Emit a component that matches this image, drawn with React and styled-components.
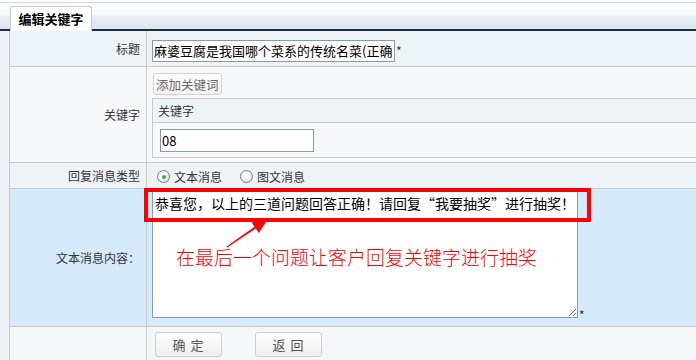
import React from "react";
import styled, { createGlobalStyle } from "styled-components";

const Global = createGlobalStyle`
  html, body { margin: 0; padding: 0; background: #fff; }
  body { font-family: "Noto Sans CJK SC", "Noto Sans", sans-serif; font-size: 12px; color: #333; overflow: hidden; }
  * { box-sizing: border-box; }
`;

const Page = styled.div`
  width: 696px;
  height: 360px;
  overflow: hidden;
  background: #fff;
`;

const Header = styled.div`
  margin-top: 2px;
  height: 29px;
  border-top: 1px solid #d6d8db;
  border-bottom: 2px solid #1b2d42;
  background: linear-gradient(#fbfcfd 0%, #f6f8fa 45%, #e7ecf1 55%, #dee5ed 100%);
  display: flex;
  align-items: flex-end;
  padding-left: 10px;
`;

const Tab = styled.div`
  width: 82px;
  height: 25px;
  margin-bottom: -2px;
  background: #fff;
  border: 1px solid #c4c9cf;
  border-bottom: none;
  border-radius: 3px 3px 0 0;
  display: flex;
  align-items: center;
  justify-content: center;
  padding-bottom: 2px;
  font-size: 13px;
  font-weight: bold;
  color: #000;
`;

const Body = styled.div`
  display: flex;
`;

const Gutter = styled.div`
  width: 9px;
  flex: none;
  background: #eef1f5;
`;

const Form = styled.div`
  flex: 1;
  border-left: 1px solid #c8cbce;
`;

const Row = styled.div`
  display: grid;
  grid-template-columns: 137px 1fr;
  height: ${(p) => p.$h}px;
  background: ${(p) => p.$bg};
  border-bottom: ${(p) => (p.$last ? "none" : "1px solid #c9c9c9")};
  box-sizing: content-box;
`;

const Label = styled.div`
  border-right: 1px solid #cbcbcb;
  display: flex;
  align-items: center;
  justify-content: flex-end;
  padding-right: 6px;
  font-size: 12px;
  color: #333;
`;

const Cell = styled.div`
  display: flex;
  align-items: ${(p) => p.$align || "center"};
  padding: ${(p) => p.$pad || "0 0 0 5px"};
  position: relative;
  min-width: 0;
`;

const Stack = styled.div`
  display: flex;
  flex-direction: column;
  align-items: flex-start;
  padding: 6px 0 0 5px;
  min-width: 0;
`;

const TextInput = styled.input`
  width: ${(p) => p.$w}px;
  height: ${(p) => p.$h || 22}px;
  border: 1px solid #7f9db9;
  padding: 0 1px;
  font-family: "Noto Sans CJK SC", sans-serif;
  font-size: 13px;
  color: #000;
  background: #fff;
  outline: none;
  overflow: hidden;
`;

const Star = styled.span`
  font-size: 12px;
  color: #333;
  margin-left: 1px;
  line-height: 1;
  align-self: ${(p) => p.$self || "auto"};
  margin-bottom: ${(p) => p.$mb || 0}px;
`;

const SmallButton = styled.button`
  height: 22px;
  padding: 0 2px 0 2px;
  margin-left: 1px;
  border: 1px solid #d3d3d3;
  border-radius: 3px;
  background: linear-gradient(#ffffff, #f1f1f1);
  font-family: "Noto Sans CJK SC", sans-serif;
  font-size: 12.5px;
  color: #6a6a6a;
`;

const SubTable = styled.div`
  margin-top: 3px;
  width: 560px;
  border: 1px solid #c8c8c8;
  border-right: none;
`;

const SubHead = styled.div`
  height: 24px;
  background: #eef3f8;
  border-bottom: 1px solid #c8c8c8;
  display: flex;
  align-items: center;
  padding-left: 5px;
  font-size: 12px;
  color: #333;
`;

const SubBody = styled.div`
  height: 34px;
  background: #f7f8f9;
  padding: 6px 0 0 7px;
`;

const RadioGroup = styled.div`
  display: flex;
  align-items: center;
  padding-left: 5px;
  padding-top: 2px;
`;

const RadioItem = styled.label`
  display: flex;
  align-items: center;
  gap: 4px;
  margin-right: 18px;
  font-size: 12px;
  color: #333;
`;

const RadioDot = styled.span`
  width: 13px;
  height: 13px;
  border-radius: 50%;
  border: 1px solid #6e8092;
  background: radial-gradient(circle at 40% 35%, #ffffff 0%, #eceff2 55%, #c6ccd4 100%);
  position: relative;
  &::after {
    content: "";
    display: ${(p) => (p.$on ? "block" : "none")};
    position: absolute;
    left: 3.5px;
    top: 3.5px;
    width: 4px;
    height: 4px;
    border-radius: 50%;
    background: #2fb22f;
  }
`;

const TextArea = styled.textarea`
  width: 426px;
  height: 128px;
  margin: 1px 0 0 0;
  border: 1px solid #7f9db9;
  padding: 2px 2px;
  font-family: "Noto Sans CJK SC", sans-serif;
  font-size: 14px;
  letter-spacing: 0;
  line-height: 20px;
  color: #000;
  background: #fff;
  outline: none;
  overflow: hidden;
  resize: both;
`;

const Highlight = styled.div`
  position: absolute;
  left: -3px;
  top: -1px;
  width: 447px;
  height: 34px;
  border: 4px solid #ff0000;
  pointer-events: none;
`;

const Arrow = styled.svg`
  position: absolute;
  left: 0;
  top: 0;
  width: 160px;
  height: 80px;
  pointer-events: none;
`;

const Note = styled.div`
  position: absolute;
  left: 29px;
  top: 56px;
  font-size: 19px;
  font-weight: 300;
  line-height: 24px;
  color: #ff0000;
  white-space: nowrap;
  pointer-events: none;
`;

const Buttons = styled.div`
  display: flex;
  gap: 33px;
  padding: 5px 0 0 8px;
`;

const Btn = styled.button`
  width: 67px;
  height: 25px;
  border: 1px solid #cfcfcf;
  border-radius: 3px;
  background: linear-gradient(#ffffff, #eeeeee);
  font-family: "Noto Sans CJK SC", sans-serif;
  font-size: 13px;
  color: #555;
  letter-spacing: 1px;
`;

export default function App() {
  return (
    <Page>
      <Global />
      <Header>
        <Tab>编辑关键字</Tab>
      </Header>
      <Body>
        <Gutter />
        <Form>
          <Row $h={35} $bg="#eef3f8">
            <Label>标题</Label>
            <Cell $pad="4px 0 0 5px">
              <TextInput $w={243} defaultValue="麻婆豆腐是我国哪个菜系的传统名菜(正确答案：川菜)" />
              <Star>*</Star>
            </Cell>
          </Row>
          <Row $h={95} $bg="#f7f8f9">
            <Label>关键字</Label>
            <Stack>
              <SmallButton>添加关键词</SmallButton>
              <SubTable>
                <SubHead>关键字</SubHead>
                <SubBody>
                  <TextInput $w={154} $h={23} defaultValue="08" />
                </SubBody>
              </SubTable>
            </Stack>
          </Row>
          <Row $h={25} $bg="#eef3f8">
            <Label>回复消息类型</Label>
            <Cell>
              <RadioGroup>
                <RadioItem>
                  <RadioDot $on />
                  文本消息
                </RadioItem>
                <RadioItem>
                  <RadioDot />
                  图文消息
                </RadioItem>
              </RadioGroup>
            </Cell>
          </Row>
          <Row $h={137} $bg="#d6eaf9">
            <Label>文本消息内容：</Label>
            <Cell $align="flex-start" $pad="0 0 0 5px">
              <TextArea defaultValue="恭喜您，以上的三道问题回答正确！请回复“我要抽奖”进行抽奖！" />
              <Star $self="flex-end" $mb={5}>*</Star>
              <Highlight />
              <Arrow viewBox="0 0 160 80">
                <polygon
                  points="80.4,58.5 108.8,39.6 111.8,44 121,30 104.6,33.5 107.6,37.8 79.6,57.5"
                  fill="#ff0000"
                />
              </Arrow>
              <Note>在最后一个问题让客户回复关键字进行抽奖</Note>
            </Cell>
          </Row>
          <Row $h={33} $bg="#f5f6f8" $last>
            <Label />
            <Buttons>
              <Btn>确 定</Btn>
              <Btn>返 回</Btn>
            </Buttons>
          </Row>
        </Form>
      </Body>
    </Page>
  );
}
